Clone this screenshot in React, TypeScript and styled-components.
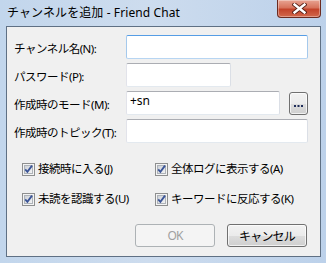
import React from 'react';
import styled, { createGlobalStyle } from 'styled-components';

const GlobalStyle = createGlobalStyle`
  html, body {
    margin: 0;
    padding: 0;
    background: #bfd3ea;
  }
  * {
    box-sizing: border-box;
  }
`;

const uiFont = `"Noto Sans", "Noto Sans CJK JP", sans-serif`;

const Window = styled.div`
  width: 326px;
  height: 263px;
  display: flex;
  flex-direction: column;
  padding: 0 5px 6px 6px;
  background: linear-gradient(90deg, #c2d6ec 0%, #cddcee 45%, #bcd1ea 100%);
  font-family: ${uiFont};
  color: #000;
`;

const TitleBar = styled.div`
  height: 26px;
  display: flex;
  align-items: flex-start;
  justify-content: space-between;
`;

const TitleText = styled.span`
  margin: 5px 0 0 1px;
  font-size: 12px;
  letter-spacing: 0.1px;
  line-height: 15px;
  color: #000;
`;

const CloseButton = styled.div`
  width: 44px;
  height: 18px;
  display: flex;
  align-items: center;
  justify-content: center;
  border: 1px solid #6b2b20;
  border-top: none;
  border-radius: 0 0 4px 4px;
  background: linear-gradient(180deg, #e8a493 0%, #d7735c 45%, #c3432a 55%, #d2684c 100%);
  box-shadow: inset 0 0 0 1px rgba(255, 255, 255, 0.35);
`;

const Client = styled.div`
  flex: 1;
  border: 1px solid #5f7084;
  background: #f0f0f0;
  padding: 8px 12px 8px 7px;
  display: flex;
  flex-direction: column;
`;

const Form = styled.div`
  display: grid;
  grid-template-columns: 112px 1fr;
  row-gap: 4px;
  align-items: center;
`;

const Label = styled.span`
  font-size: 11.5px;
  letter-spacing: -0.5px;
  line-height: 14px;
  padding-top: 4px;
  white-space: nowrap;
`;

const FieldRow = styled.div`
  display: flex;
  align-items: center;
  gap: 9px;
`;

const TextBox = styled.div<{ $w: number; $focused?: boolean }>`
  width: ${({ $w }) => $w}px;
  height: 24px;
  background: #fff;
  border: 1px solid;
  border-radius: 2px;
  border-color: ${({ $focused }) =>
    $focused ? '#569de5 #a5c9ec #b7d5f2 #a5c9ec' : '#abadb3 #dbdfe6 #e3e9ef #e2e3ea'};
  font-size: 12px;
  line-height: 14px;
  padding: 2px 3px;
`;

const SmallButton = styled.div`
  width: 19px;
  height: 23px;
  border: 1px solid #707070;
  border-radius: 3px;
  background: linear-gradient(180deg, #f2f2f2 0%, #ebebeb 50%, #dddddd 51%, #cfcfcf 100%);
  box-shadow: inset 0 0 0 1px rgba(255, 255, 255, 0.7);
  display: flex;
  align-items: flex-end;
  justify-content: center;
  padding-bottom: 6px;
`;

const Checks = styled.div`
  margin-top: 19px;
  padding-left: 8px;
  display: grid;
  grid-template-columns: 133px 1fr;
  row-gap: 16px;
`;

const CheckItem = styled.label`
  display: flex;
  align-items: center;
  gap: 3px;
  font-size: 11.5px;
  letter-spacing: -0.5px;
  line-height: 14px;
  white-space: nowrap;
`;

const Buttons = styled.div`
  margin-top: auto;
  margin-bottom: 1px;
  display: flex;
  justify-content: flex-end;
  gap: 12px;
  padding-right: 1px;
`;

const PushButton = styled.div<{ $disabled?: boolean }>`
  width: 80px;
  height: 23px;
  display: flex;
  align-items: center;
  justify-content: center;
  border-radius: 3px;
  font-size: 12px;
  letter-spacing: -0.8px;
  border: 1px solid ${({ $disabled }) => ($disabled ? '#adb2b5' : '#707070')};
  color: ${({ $disabled }) => ($disabled ? '#a0a0a0' : '#000')};
  background: ${({ $disabled }) =>
    $disabled
      ? '#f4f4f4'
      : 'linear-gradient(180deg, #f2f2f2 0%, #ebebeb 50%, #dddddd 51%, #cfcfcf 100%)'};
  box-shadow: ${({ $disabled }) => ($disabled ? 'none' : 'inset 0 0 0 1px rgba(255,255,255,0.7)')};
`;

const CheckBox = () => (
  <svg width="13" height="13" viewBox="0 0 13 13">
    <defs>
      <linearGradient id="cbg" x1="0" y1="0" x2="1" y2="1">
        <stop offset="0" stopColor="#cbcfd5" />
        <stop offset="1" stopColor="#f6f6f6" />
      </linearGradient>
    </defs>
    <rect x="0.5" y="0.5" width="12" height="12" fill="#f4f4f4" stroke="#8e8f8f" />
    <rect x="2.5" y="2.5" width="8" height="8" fill="url(#cbg)" stroke="#aeb3b9" />
    <path d="M3.2 6.4 L5.4 8.8 L10 2.6" fill="none" stroke="#3a5497" strokeWidth="1.8" />
  </svg>
);

const CloseX = () => (
  <svg width="15" height="11" viewBox="0 0 15 11">
    <path d="M2.5 1.5 L12.5 9.5 M12.5 1.5 L2.5 9.5" stroke="#5a2218" strokeWidth="4.2" strokeLinecap="square" />
    <path d="M2.5 1.5 L12.5 9.5 M12.5 1.5 L2.5 9.5" stroke="#fff" strokeWidth="2.4" strokeLinecap="square" />
  </svg>
);

const Dots = () => (
  <svg width="9" height="3" viewBox="0 0 9 3">
    <rect x="0" y="0" width="2" height="2" fill="#1f2d5a" />
    <rect x="3.5" y="0" width="2" height="2" fill="#1f2d5a" />
    <rect x="7" y="0" width="2" height="2" fill="#1f2d5a" />
  </svg>
);

const checks = [
  '接続時に入る(J)',
  '全体ログに表示する(A)',
  '未読を認識する(U)',
  'キーワードに反応する(K)',
];

export default function App() {
  return (
    <>
      <GlobalStyle />
      <Window>
        <TitleBar>
          <TitleText>チャンネルを追加 - Friend Chat</TitleText>
          <CloseButton>
            <CloseX />
          </CloseButton>
        </TitleBar>
        <Client>
          <Form>
            <Label>チャンネル名(N):</Label>
            <TextBox $w={182} $focused />
            <Label>パスワード(P):</Label>
            <TextBox $w={105} />
            <Label>作成時のモード(M):</Label>
            <FieldRow>
              <TextBox $w={154}>+sn</TextBox>
              <SmallButton>
                <Dots />
              </SmallButton>
            </FieldRow>
            <Label>作成時のトピック(T):</Label>
            <TextBox $w={182} />
          </Form>
          <Checks>
            {checks.map((c) => (
              <CheckItem key={c}>
                <CheckBox />
                {c}
              </CheckItem>
            ))}
          </Checks>
          <Buttons>
            <PushButton $disabled>OK</PushButton>
            <PushButton>キャンセル</PushButton>
          </Buttons>
        </Client>
      </Window>
    </>
  );
}
